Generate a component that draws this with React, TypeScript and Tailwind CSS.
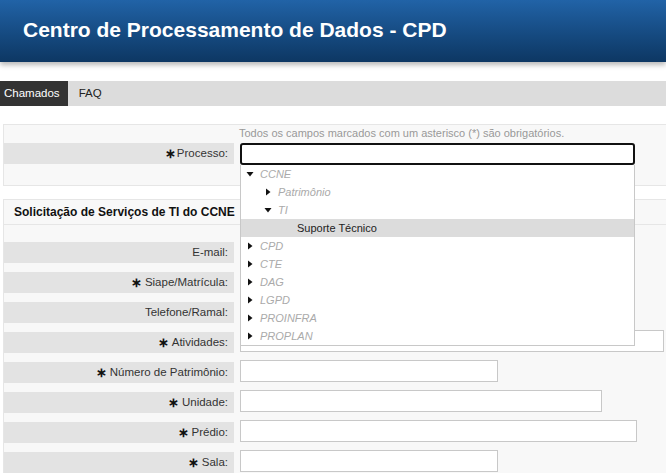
import React from "react";

type Node = { label: string; depth: number; kind: "open" | "closed" | "leaf"; active?: boolean };

const TREE: Node[] = [
  { label: "CCNE", depth: 0, kind: "open" },
  { label: "Patrimônio", depth: 1, kind: "closed" },
  { label: "TI", depth: 1, kind: "open" },
  { label: "Suporte Técnico", depth: 2, kind: "leaf", active: true },
  { label: "CPD", depth: 0, kind: "closed" },
  { label: "CTE", depth: 0, kind: "closed" },
  { label: "DAG", depth: 0, kind: "closed" },
  { label: "LGPD", depth: 0, kind: "closed" },
  { label: "PROINFRA", depth: 0, kind: "closed" },
  { label: "PROPLAN", depth: 0, kind: "closed" },
];

const FIELDS: { label: string; req: boolean; width: string }[] = [
  { label: "E-mail:", req: false, width: "w-[258px]" },
  { label: "Siape/Matrícula:", req: true, width: "w-[258px]" },
  { label: "Telefone/Ramal:", req: false, width: "w-[258px]" },
  { label: "Atividades:", req: true, width: "w-[424px]" },
  { label: "Número de Patrimônio:", req: true, width: "w-[258px]" },
  { label: "Unidade:", req: true, width: "w-[362px]" },
  { label: "Prédio:", req: true, width: "w-[397px]" },
  { label: "Sala:", req: true, width: "w-[258px]" },
];

function Star({ gap = true }: { gap?: boolean }) {
  return <span className={`${gap ? "mr-[3px]" : "mr-[1px]"} text-[13px] font-bold text-[#111]`}>∗</span>;
}

function Caret({ open }: { open: boolean }) {
  return (
    <svg width="8" height="8" viewBox="0 0 8 8" className="shrink-0">
      {open ? <polygon points="0.5,2 7.5,2 4,6.5" fill="#111" /> : <polygon points="2,0.5 6.5,4 2,7.5" fill="#111" />}
    </svg>
  );
}

function Dropdown() {
  return (
    <div className="absolute left-[236px] top-[22px] z-10 h-[181px] w-[395px] border border-t-0 border-[#c8c8c8] bg-white">
      {TREE.map((n) => (
        <div
          key={n.label}
          className={`flex h-[18px] items-center text-[11px] ${n.active ? "bg-[#dcdcdc] text-[#222]" : "italic text-[#aaa]"}`}
          style={{ paddingLeft: n.kind === "leaf" ? 56 : 5 + n.depth * 18 }}
        >
          {n.kind !== "leaf" && <Caret open={n.kind === "open"} />}
          <span className={n.kind === "leaf" ? "" : "ml-[6px]"}>{n.label}</span>
        </div>
      ))}
    </div>
  );
}

export default function App() {
  return (
    <div className="h-[475px] w-[666px] overflow-hidden bg-white text-[#333]" style={{ fontFamily: '"Liberation Sans", Arial, sans-serif' }}>
      <header className="relative z-20 h-[62px] bg-gradient-to-b from-[#2163a7] to-[#0d3763] pl-[23px] pt-[17px] shadow-[0_3px_5px_rgba(0,0,0,0.28)]">
        <h1 className="text-[21px] font-bold leading-[26px] text-white">Centro de Processamento de Dados - CPD</h1>
      </header>

      <nav className="mt-[19px] flex h-[25px] bg-[#dcdcdc] text-[11.5px]">
        <a className="flex items-center bg-[#333] pl-[4px] pr-[8px] text-white">Chamados</a>
        <a className="flex items-center pl-[11px] text-[#222]">FAQ</a>
      </nav>

      <section className="ml-[3px] mt-[18px] h-[62px] w-[700px] border border-[#e6e6e6] bg-[#f8f8f8]">
        <p className="pl-[235px] pt-[1px] text-[11px] leading-[14px] text-[#999]">
          Todos os campos marcados com um asterisco (*) são obrigatórios.
        </p>
        <div className="relative mt-[3px] flex">
          <label className="flex h-[21px] w-[230px] items-center justify-end bg-[#e3e3e3] pr-[6px] text-[11.5px]">
            <Star gap={false} />Processo:
          </label>
          <input className="ml-[6px] h-[22px] w-[395px] rounded-[3px] border-2 border-[#111] bg-white outline-none" />
          <Dropdown />
        </div>
      </section>

      <section className="ml-[3px] mt-[13px] w-[700px] border-l border-t border-[#e6e6e6] bg-[#f8f8f8]">
        <h2 className="flex h-[25px] items-center border-b border-[#e6e6e6] pl-[10px] text-[12px] font-bold text-[#111]">
          Solicitação de Serviços de TI do CCNE
        </h2>
        <div className="flex flex-col gap-[7px] pt-[15px]">
          {FIELDS.map((f) => (
            <div key={f.label} className="flex items-start">
              <label className="mt-[2px] flex h-[21px] w-[230px] items-center justify-end bg-[#e3e3e3] pr-[6px] text-[11.5px]">
                {f.req && <Star />}
                {f.label}
              </label>
              <input className={`ml-[6px] h-[22px] ${f.width} border border-[#c8c8c8] bg-white outline-none`} />
            </div>
          ))}
        </div>
      </section>
    </div>
  );
}
